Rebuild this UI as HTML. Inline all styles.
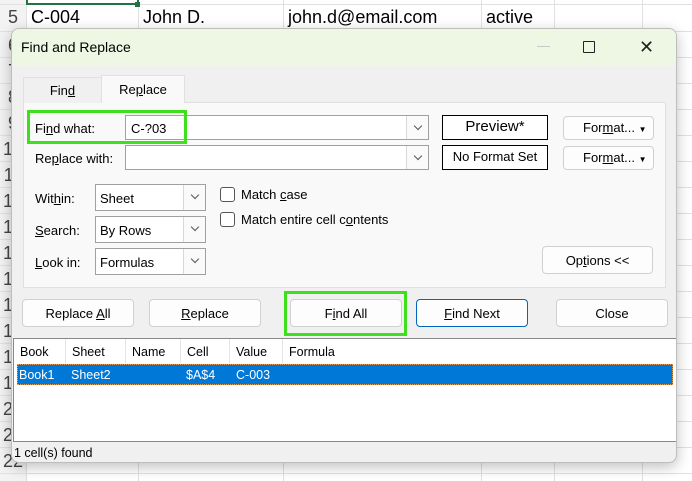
<!DOCTYPE html><html><head><style>
*{box-sizing:border-box;margin:0;padding:0}
body{width:692px;height:481px;overflow:hidden;background:#fff;font-family:"Liberation Sans",sans-serif;font-size:13px;color:#000;position:relative}
.a{position:absolute}
.hl{position:absolute;left:0;width:692px;height:1px;background:#e1e1e1}
.vl{position:absolute;top:0;height:481px;width:1px;background:#e1e1e1}
.rn{position:absolute;left:0;width:26px;font-size:18px;color:#444;text-align:center}
.btn{position:absolute;background:#fdfdfd;border:1px solid #d0d0d0;border-radius:4px;text-align:center;font-size:13px;line-height:28px}
.cb{position:absolute;background:#fff;border:1px solid #a0a0a0}
.dd{position:absolute;right:0;top:0;bottom:0;width:22px;border-left:1px solid #d8d8d8;background:#fafafa}
.dd:after{content:"";position:absolute;left:8px;top:7px;width:5px;height:5px;border-right:1px solid #555;border-bottom:1px solid #555;transform:rotate(45deg)}
u{text-decoration:underline}
</style></head><body>
<div class="a" style="left:0;top:0;width:26px;height:481px;background:#f3f3f3"></div>
<div class="hl" style="top:4px"></div><div class="hl" style="top:31px"></div><div class="hl" style="top:57px"></div><div class="hl" style="top:83px"></div><div class="hl" style="top:109px"></div><div class="hl" style="top:135px"></div><div class="hl" style="top:161px"></div><div class="hl" style="top:187px"></div><div class="hl" style="top:213px"></div><div class="hl" style="top:239px"></div><div class="hl" style="top:265px"></div><div class="hl" style="top:291px"></div><div class="hl" style="top:317px"></div><div class="hl" style="top:343px"></div><div class="hl" style="top:369px"></div><div class="hl" style="top:395px"></div><div class="hl" style="top:421px"></div><div class="hl" style="top:447px"></div><div class="hl" style="top:473px"></div>
<div class="vl" style="left:26px"></div><div class="vl" style="left:138px"></div><div class="vl" style="left:283px"></div><div class="vl" style="left:481px"></div><div class="vl" style="left:554px"></div><div class="vl" style="left:642px"></div>
<div class="a" style="left:26px;top:0;width:113px;height:5px;border:2px solid #217346;border-top:none"></div>
<div class="a" style="left:135px;top:2px;width:5px;height:5px;background:#217346"></div>
<div class="a" style="left:31px;top:7px;font-size:18px">C-004</div>
<div class="a" style="left:143px;top:7px;font-size:18px">John D.</div>
<div class="a" style="left:288px;top:7px;font-size:18px">john.d@email.com</div>
<div class="a" style="left:486px;top:7px;font-size:18px">active</div>
<div class="rn" style="top:7px">5</div><div class="rn" style="top:35px">6</div><div class="rn" style="top:61px">7</div><div class="rn" style="top:87px">8</div><div class="rn" style="top:113px">9</div><div class="rn" style="top:139px">10</div><div class="rn" style="top:165px">11</div><div class="rn" style="top:191px">12</div><div class="rn" style="top:217px">13</div><div class="rn" style="top:243px">14</div><div class="rn" style="top:269px">15</div><div class="rn" style="top:295px">16</div><div class="rn" style="top:321px">17</div><div class="rn" style="top:347px">18</div><div class="rn" style="top:373px">19</div><div class="rn" style="top:399px">20</div><div class="rn" style="top:425px">21</div><div class="rn" style="top:451px">22</div>

<div class="a" style="left:11px;top:28px;width:666px;height:435px;background:#f0f0f0;border:1px solid #bdbdbd;border-radius:8px;box-shadow:0 4px 14px rgba(0,0,0,.25);overflow:hidden">
 <div class="a" style="left:0;top:0;width:666px;height:37px;background:#edf7e3"></div>
 <div class="a" style="left:9px;top:10px;font-size:14px">Find and Replace</div>
 <div class="a" style="left:525px;top:17px;width:13px;height:1px;background:#c8c8c8"></div>
 <div class="a" style="left:571px;top:12px;width:12px;height:12px;border:1.5px solid #222;border-radius:1px"></div>
 <div class="a" style="left:627px;top:9px;font-size:18px;line-height:18px;color:#222">✕</div>

 <div class="a" style="left:11px;top:73px;width:643px;height:186px;background:#f9f9f9;border:1px solid #e0e0e0"></div>
 <div class="a" style="left:11px;top:48px;width:79px;height:26px;background:#f0f0f0;border:1px solid #e0e0e0;border-bottom:none;text-align:center;line-height:26px">Fin<u>d</u></div>
 <div class="a" style="left:89px;top:46px;width:84px;height:28px;background:#f9f9f9;border:1px solid #e0e0e0;border-bottom:none;text-align:center;line-height:28px">Re<u>p</u>lace</div>

 <div class="a" style="left:23px;top:92px">Fi<u>n</u>d what:</div>
 <div class="a" style="left:23px;top:122px">Re<u>p</u>lace with:</div>
 <div class="cb" style="left:113px;top:86px;width:304px;height:25px"><span class="a" style="left:5px;top:5px">C-?03</span><div class="dd"></div></div>
 <div class="cb" style="left:113px;top:116px;width:304px;height:25px"><div class="dd"></div></div>
 <div class="a" style="left:15px;top:81px;width:160px;height:34px;border:3px solid #3ee01c"></div>
 <div class="a" style="left:430px;top:86px;width:106px;height:25px;border:1.5px solid #000;background:#fff;text-align:center;line-height:22px;font-size:15px">Preview*</div>
 <div class="a" style="left:430px;top:116px;width:106px;height:25px;border:1.5px solid #000;background:#fff;text-align:center;line-height:22px">No Format Set</div>
 <div class="btn" style="left:551px;top:87px;width:91px;height:24px;line-height:22px;text-align:left;padding-left:19px">For<u>m</u>at... <span style="font-size:8px">▼</span></div>
 <div class="btn" style="left:551px;top:117px;width:91px;height:24px;line-height:22px;text-align:left;padding-left:19px">For<u>m</u>at... <span style="font-size:8px">▼</span></div>

 <div class="a" style="left:23px;top:162px">Wit<u>h</u>in:</div>
 <div class="a" style="left:23px;top:194px"><u>S</u>earch:</div>
 <div class="a" style="left:23px;top:226px"><u>L</u>ook in:</div>
 <div class="cb" style="left:83px;top:155px;width:111px;height:27px"><span class="a" style="left:4px;top:6px">Sheet</span><div class="dd"></div></div>
 <div class="cb" style="left:83px;top:187px;width:111px;height:27px"><span class="a" style="left:4px;top:6px">By Rows</span><div class="dd"></div></div>
 <div class="cb" style="left:83px;top:219px;width:111px;height:27px"><span class="a" style="left:4px;top:6px">Formulas</span><div class="dd"></div></div>
 <div class="a" style="left:208px;top:158px;width:15px;height:15px;border:1px solid #555;border-radius:3px;background:#fff"></div>
 <div class="a" style="left:229px;top:158px">Match <u>c</u>ase</div>
 <div class="a" style="left:208px;top:183px;width:15px;height:15px;border:1px solid #555;border-radius:3px;background:#fff"></div>
 <div class="a" style="left:229px;top:183px">Match entire cell c<u>o</u>ntents</div>
 <div class="btn" style="left:530px;top:217px;width:111px;height:28px">Op<u>t</u>ions &lt;&lt;</div>

 <div class="btn" style="left:10px;top:270px;width:112px;height:28px">Replace <u>A</u>ll</div>
 <div class="btn" style="left:137px;top:270px;width:112px;height:28px"><u>R</u>eplace</div>
 <div class="btn" style="left:278px;top:270px;width:112px;height:28px">F<u>i</u>nd All</div>
 <div class="a" style="left:272px;top:262px;width:123px;height:45px;border:3px solid #3ee01c"></div>
 <div class="btn" style="left:404px;top:270px;width:112px;height:28px;border-color:#0067c0"><u>F</u>ind Next</div>
 <div class="btn" style="left:544px;top:270px;width:112px;height:28px">Close</div>

 <div class="a" style="left:1px;top:309px;width:665px;height:104px;background:#fff;border:1px solid #888"></div>
 <div class="a" style="left:1px;top:310px;width:665px;height:24px;font-size:12.5px">
  <span class="a" style="left:7px;top:6px">Book</span><span class="a" style="left:59px;top:6px">Sheet</span><span class="a" style="left:119px;top:6px">Name</span><span class="a" style="left:174px;top:6px">Cell</span><span class="a" style="left:223px;top:6px">Value</span><span class="a" style="left:276px;top:6px">Formula</span>
  <div class="a" style="left:52px;top:0;width:1px;height:24px;background:#e5e5e5"></div><div class="a" style="left:112px;top:0;width:1px;height:24px;background:#e5e5e5"></div><div class="a" style="left:167px;top:0;width:1px;height:24px;background:#e5e5e5"></div><div class="a" style="left:216px;top:0;width:1px;height:24px;background:#e5e5e5"></div><div class="a" style="left:269px;top:0;width:1px;height:24px;background:#e5e5e5"></div>
 </div>
 <div class="a" style="left:5px;top:335px;width:656px;height:21px;background:#0078d7;border:1px dotted #e0a060;color:#fff;font-size:12.5px">
  <span class="a" style="left:1px;top:3px">Book1</span><span class="a" style="left:53px;top:3px">Sheet2</span><span class="a" style="left:168px;top:3px">$A$4</span><span class="a" style="left:218px;top:3px">C-003</span>
 </div>
 <div class="a" style="left:2px;top:417px;font-size:12.5px">1 cell(s) found</div>
</div>
</body></html>
